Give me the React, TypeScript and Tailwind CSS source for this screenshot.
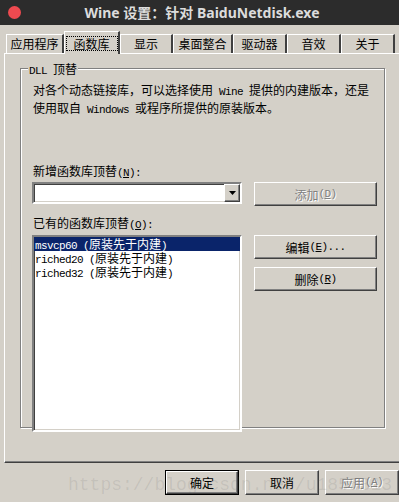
import clsx from 'clsx'
import type { ReactNode } from 'react'

const latin = "font-['Liberation_Mono'] text-[11px] tracking-[-0.6px]"
const CJK = /[\u2e80-\u9fff\u3000-\u303f\uff00-\uffef]/

// splits a label into CJK / latin runs, "&X" marks the underlined mnemonic
function Txt({ s }: { s: string }) {
  const parts = s.split(/([\u2e80-\u9fff\u3000-\u303f\uff00-\uffef]+|&.)/).filter(Boolean)
  return (
    <>
      {parts.map((p, i) => {
        if (p.startsWith('&')) return <span key={i} className={clsx(latin, 'underline')}>{p.slice(1)}</span>
        if (CJK.test(p)) return <span key={i}>{p}</span>
        return <span key={i} className={latin}>{p}</span>
      })}
    </>
  )
}

const raised =
  'border border-t-white border-l-white border-r-[#404040] border-b-[#404040] shadow-[inset_-1px_-1px_0_#808080]'
const sunken =
  'border-2 border-t-[#808080] border-l-[#808080] border-r-white border-b-white shadow-[inset_1px_1px_0_#404040,inset_-1px_-1px_0_#d4d0c8]'

function Btn({ label, disabled, className }: { label: string; disabled?: boolean; className?: string }) {
  return (
    <div
      className={clsx(
        'flex items-center justify-center leading-[15px] whitespace-nowrap',
        raised,
        disabled && 'text-[#808080] [text-shadow:1px_1px_0_#fff]',
        className
      )}
    >
      <Txt s={label} />
    </div>
  )
}

const tabs = [
  { label: '应用程序', w: 'w-[58px]' },
  { label: '函数库', w: 'w-[56px]', active: true },
  { label: '显示', w: 'w-[53px]' },
  { label: '桌面整合', w: 'w-[60px]' },
  { label: '驱动器', w: 'w-[54px]' },
  { label: '音效', w: 'w-[54px]' },
  { label: '关于', w: 'w-[54px]' },
]

const dlls = ['msvcp60 (原装先于内建)', 'riched20 (原装先于内建)', 'riched32 (原装先于内建)']

function Tab({ label, w, active }: { label: string; w: string; active?: boolean }): ReactNode {
  if (active) {
    return (
      <div
        className={clsx(
          w,
          'relative z-10 -mb-px h-[23px] flex flex-col items-center pt-[4px] bg-[#d4d0c8] border-l border-t border-l-white border-t-white border-r-2 border-r-[#404040]'
        )}
      >
        <div className="w-[52px] h-[15px] border border-dotted border-black flex items-center justify-center leading-[13px]">
          {label}
        </div>
      </div>
    )
  }
  return (
    <div
      className={clsx(
        w,
        'h-[19px] flex justify-center pt-[1px] leading-[15px] border-l border-t border-l-white border-t-white border-r-2 border-r-[#404040]'
      )}
    >
      {label}
    </div>
  )
}

export default function App() {
  return (
    <div className="relative w-[399px] h-[502px] overflow-hidden bg-[#d4d0c8] text-black text-[12px] font-['Noto_Sans_CJK_SC',sans-serif]">
      <div className="h-[25px] bg-[#2c2c2c] flex items-center">
        <div className="ml-[8px] w-[13px] h-[13px] rounded-full bg-[#ef4a50]" />
        <div className="flex-1 text-center pr-[16px] text-[14px] font-bold text-[#dcdcdc] font-['Noto_Sans','Noto_Sans_CJK_SC',sans-serif] leading-none">
          Wine 设置：针对 BaiduNetdisk.exe
        </div>
      </div>

      <div className="h-[28px] pl-[6px] flex items-end">
        {tabs.map((t) => (
          <Tab key={t.label} {...t} />
        ))}
      </div>

      <div className="ml-[4px] w-[420px] h-[410px] border-l border-t border-l-white border-t-white border-b border-b-[#404040] shadow-[inset_0_-1px_0_#808080] pt-[14px] pl-[15px]">
        <div className="relative w-[365px] h-[360px] border border-[#808080] shadow-[inset_1px_1px_0_#fff,1px_1px_0_#fff]">
          <div className="absolute -top-[8px] left-[7px] px-px bg-[#d4d0c8] leading-[15px]">
            <Txt s="DLL 顶替" />
          </div>

          <div className="mt-[13px] pl-[12px] leading-[15px] whitespace-nowrap">
            <div>
              <Txt s="对各个动态链接库，可以选择使用 Wine 提供的内建版本，还是" />
            </div>
            <div>
              <Txt s="使用取自 Windows 或程序所提供的原装版本。" />
            </div>
          </div>

          <div className="mt-[45px] pl-[12px] leading-[15px]">
            <Txt s="新增函数库顶替(&N):" />
          </div>
          <div className="mt-px ml-[11px] flex items-start gap-[12px]">
            <div className={clsx('w-[210px] h-[22px] bg-white flex justify-end', sunken)}>
              <div className={clsx('w-[16px] h-full bg-[#d4d0c8] flex items-center justify-center', raised)}>
                <svg width="7" height="4" viewBox="0 0 7 4">
                  <polygon points="0,0 7,0 3.5,4" fill="#000" />
                </svg>
              </div>
            </div>
            <Btn label="添加(&D)" disabled className="w-[123px] h-[24px]" />
          </div>

          <div className="mt-[9px] pl-[12px] leading-[15px]">
            <Txt s="已有的函数库顶替(&O):" />
          </div>
          <div className="mt-[2px] ml-[11px] flex items-start gap-[12px]">
            <div className={clsx('w-[210px] h-[197px] bg-white', sunken)}>
              {dlls.map((d, i) => (
                <div
                  key={d}
                  className={clsx(
                    'h-[14px] pl-px leading-[14px] whitespace-nowrap',
                    i === 0 && 'bg-[#0a246a] text-white'
                  )}
                >
                  <Txt s={d} />
                </div>
              ))}
            </div>
            <div className="flex flex-col gap-[8px]">
              <Btn label="编辑(&E)..." className="w-[123px] h-[24px]" />
              <Btn label="删除(&R)" className="w-[123px] h-[24px]" />
            </div>
          </div>
        </div>
      </div>

      <div className="mt-[7px] pl-[165px] flex gap-[6px]">
        <div className="w-[75px] h-[25px] border border-black flex">
          <Btn label="确定" className="flex-1" />
        </div>
        <Btn label="取消" className="w-[75px] h-[25px]" />
        <Btn label="应用(&A)" disabled className="w-[75px] h-[25px]" />
      </div>

      <div className="absolute left-[68px] top-[472px] text-[18px] font-['Liberation_Mono',monospace] text-[rgba(90,90,90,0.13)] pointer-events-none whitespace-nowrap">
        https://blog.csdn.net/u1855313
      </div>
    </div>
  )
}
